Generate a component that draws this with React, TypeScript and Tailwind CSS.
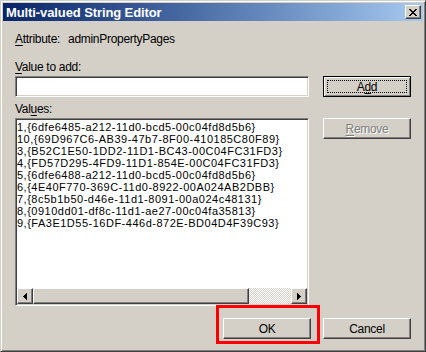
const face = { fontFamily: '"Liberation Sans", Arial, sans-serif' }

const values = [
  '1,{6dfe6485-a212-11d0-bcd5-00c04fd8d5b6}',
  '10,{69D967C6-AB39-47b7-8F00-410185C80F89}',
  '3,{B52C1E50-1DD2-11D1-BC43-00C04FC31FD3}',
  '4,{FD57D295-4FD9-11D1-854E-00C04FC31FD3}',
  '5,{6dfe6488-a212-11d0-bcd5-00c04fd8d5b6}',
  '6,{4E40F770-369C-11d0-8922-00A024AB2DBB}',
  '7,{8c5b1b50-d46e-11d1-8091-00a024c48131}',
  '8,{0910dd01-df8c-11d1-ae27-00c04fa35813}',
  '9,{FA3E1D55-16DF-446d-872E-BD04D4F39C93}',
]

const closeX = ['11....11', '.11..11.', '..1111..', '...11...', '..1111..', '.11..11.', '11....11']

function CloseGlyph() {
  return (
    <svg width="8" height="7" viewBox="0 0 8 7" shapeRendering="crispEdges">
      {closeX.flatMap((row, y) =>
        row.split('').map((c, x) => (c === '1' ? <rect key={`${x}-${y}`} x={x} y={y} width="1" height="1" fill="#000" /> : null))
      )}
    </svg>
  )
}

function Arrow({ dir }: { dir: 'left' | 'right' }) {
  const widths = [1, 2, 3, 4, 3, 2, 1]
  return (
    <svg width="4" height="7" viewBox="0 0 4 7" shapeRendering="crispEdges">
      {widths.map((w, y) => (
        <rect key={y} x={dir === 'left' ? 4 - w : 0} y={y} width={w} height="1" fill="#000" />
      ))}
    </svg>
  )
}

const raised =
  'border border-t-white border-l-white border-r-[#404040] border-b-[#404040] shadow-[inset_-1px_-1px_0_#808080] bg-[#d4d0c8]'
const sunken =
  'border border-t-[#808080] border-l-[#808080] border-r-white border-b-white shadow-[inset_1px_1px_0_#404040,inset_-1px_-1px_0_#d4d0c8]'

function Button({ children, disabled = false }: { children: React.ReactNode; disabled?: boolean }) {
  return (
    <div
      className={`${raised} w-[88px] h-[21px] flex items-center justify-center text-[12px] ${
        disabled ? 'text-[#808080] [text-shadow:1px_1px_0_#fff]' : 'text-black'
      }`}
    >
      {children}
    </div>
  )
}

export default function App() {
  return (
    <div
      className="w-[426px] h-[352px] bg-[#d4d0c8] p-[2px] border border-t-[#d4d0c8] border-l-[#d4d0c8] border-r-[#404040] border-b-[#404040] shadow-[inset_1px_1px_0_#fff,inset_-1px_-1px_0_#808080] flex flex-col select-none"
      style={face}
    >
      {/* title bar */}
      <div className="h-[18px] bg-gradient-to-r from-[#0a246a] to-[#a6caf0] flex items-center pl-[3px] pr-[2px]">
        <span className="text-white font-bold text-[13px] leading-none tracking-[-0.1px]">Multi-valued String Editor</span>
        <div className={`${raised} ml-auto w-[16px] h-[14px] flex items-center justify-center`}>
          <CloseGlyph />
        </div>
      </div>

      <div className="pl-[12px] pr-[12px] pt-[11px] flex flex-col text-[12px] leading-[14px] text-black tracking-[-0.3px]">
        <p className="h-[14px]">
          <span className="underline underline-offset-[2px]">A</span>ttribute:
          <span className="ml-[8px]">adminPropertyPages</span>
        </p>

        <p className="mt-[14px] h-[14px]">
          <span className="underline underline-offset-[2px]">V</span>alue to add:
        </p>
        <div className="mt-[2px] flex gap-[14px]">
          <div className={`${sunken} w-[294px] h-[21px] bg-white`} />
          <div className="relative w-[88px] h-[21px] border border-black shadow-[inset_1px_1px_0_#fff,inset_-1px_-1px_0_#808080] flex items-center justify-center">
            <span>
              A<span className="underline underline-offset-[2px]">d</span>d
            </span>
            <div className="absolute top-[3px] bottom-[3px] left-[3px] right-[3px] border border-dotted border-black" />
          </div>
        </div>

        <p className="mt-[5px] h-[14px]">
          Val<span className="underline underline-offset-[2px]">u</span>es:
        </p>
        <div className="mt-[2px] flex gap-[14px] items-start">
          <div className={`${sunken} w-[294px] h-[188px] bg-white p-[1px] flex flex-col`}>
            <div className="flex-1 pt-[1px] text-[11px] leading-[12px] tracking-[0.5px] overflow-hidden whitespace-nowrap">
              {values.map((v) => (
                <div key={v}>{v}</div>
              ))}
            </div>
            <div className="h-[16px] flex">
              <div className={`${raised} w-[16px] h-[16px] flex items-center justify-center`}>
                <Arrow dir="left" />
              </div>
              <div className={`${raised} w-[216px] h-[16px]`} />
              <div className="flex-1 bg-[image:repeating-conic-gradient(#ffffff_0_25%,#d4d0c8_0_50%)] bg-[size:2px_2px]" />
              <div className={`${raised} w-[16px] h-[16px] flex items-center justify-center`}>
                <Arrow dir="right" />
              </div>
            </div>
          </div>
          <Button disabled>
            <span>
              <span className="underline underline-offset-[2px]">R</span>emove
            </span>
          </Button>
        </div>

        <div className="mt-[12px] flex justify-end gap-[12px]">
          <div className="relative">
            <Button>OK</Button>
            <div className="absolute left-[-7px] top-[-13px] w-[104px] h-[39px] border-[3px] border-[#ff0000]" />
          </div>
          <Button>Cancel</Button>
        </div>
      </div>
    </div>
  )
}
